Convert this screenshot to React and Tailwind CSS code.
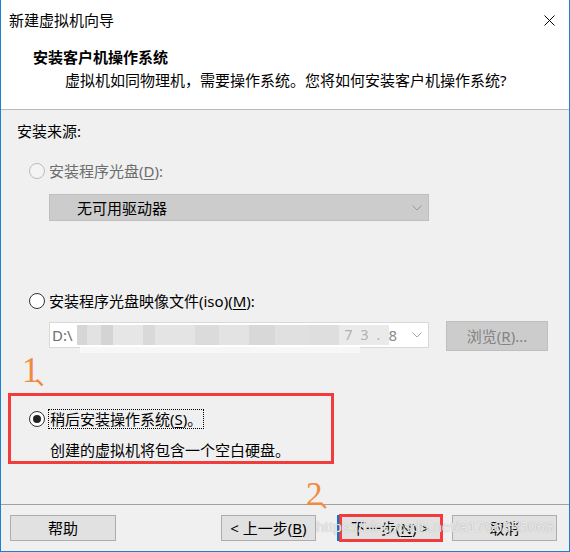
const F = "font-['Noto_Sans','Noto_Sans_CJK_SC',sans-serif]";

function Chevron({ color }) {
  return (
    <svg width="10" height="6" viewBox="0 0 10 6" className="shrink-0">
      <polyline points="0.5,0.5 5,5 9.5,0.5" fill="none" stroke={color} strokeWidth="1" />
    </svg>
  );
}

function U({ children }) {
  return <span className="underline underline-offset-2">{children}</span>;
}

export default function App() {
  return (
    <div className={`${F} relative w-[570px] h-[552px] bg-[#f0f0f0] border-x border-b border-[#1b7fd2] flex flex-col overflow-hidden text-[15px] leading-[20px] text-black`}>
      {/* header */}
      <div className="bg-white h-[110px] shrink-0 flex flex-col border-b border-[#b9b9b9]">
        <div className="h-[40px] flex items-center justify-between pl-[8px] pr-[14px]">
          <span>新建虚拟机向导</span>
          <svg width="11" height="11" viewBox="0 0 11 11">
            <path d="M0.5 0.5L10.5 10.5M10.5 0.5L0.5 10.5" stroke="#000" strokeWidth="1" />
          </svg>
        </div>
        <div className="pl-[32px] mt-[7px] font-bold">安装客户机操作系统</div>
        <div className="pl-[64px] mt-[3px]">虚拟机如同物理机，需要操作系统。您将如何安装客户机操作系统?</div>
      </div>

      {/* body */}
      <div className="flex-1 flex flex-col items-start">
        <div className="ml-[16px] mt-[11px]">安装来源:</div>

        <div className="ml-[28px] mt-[20px] h-[20px] flex items-center gap-[4px]">
          <span className="w-[16px] h-[16px] rounded-full border border-[#bcbcbc] bg-[#f4f4f4]" />
          <span className="text-[#6d6d6d]">安装程序光盘(<U>D</U>):</span>
        </div>

        <div className="ml-[48px] mt-[13px] w-[380px] h-[27px] bg-[#cccccc] border border-[#bfbfbf] flex items-center pl-[27px] pr-[6px]">
          <span className="flex-1">无可用驱动器</span>
          <Chevron color="#9a9a9a" />
        </div>

        <div className="ml-[28px] mt-[70px] h-[20px] flex items-center gap-[4px]">
          <span className="w-[16px] h-[16px] rounded-full border border-[#333333] bg-white" />
          <span>安装程序光盘映像文件(iso)(<U>M</U>):</span>
        </div>

        <div className="ml-[48px] mt-[10px] flex items-start">
          <div className="relative mt-[1px] w-[380px] h-[26px] bg-white border border-[#d9d9d9] flex items-center pl-[2px] pr-[6px]">
            <span className="text-[#6d6d6d]">D:\</span>
            <div className="flex-1 flex items-center h-[20px] ml-[4px]">
              <span className="w-[10px] h-[20px] bg-[#d6d6d6]" />
              <span className="w-[14px] h-[20px] bg-[#e2e2e2]" />
              <span className="w-[12px] h-[20px] bg-[#d4d4d4]" />
              <span className="w-[30px] h-[20px] bg-[#e6e6e6]" />
              <span className="w-[12px] h-[20px] bg-[#d9d9d9]" />
              <span className="w-[40px] h-[20px] bg-[#e4e4e4]" />
              <span className="w-[24px] h-[20px] bg-[#dbdbdb]" />
              <span className="w-[30px] h-[20px] bg-[#e3e3e3]" />
              <span className="w-[26px] h-[20px] bg-[#d8d8d8]" />
              <span className="w-[34px] h-[20px] bg-[#e0e0e0]" />
              <span className="w-[30px] h-[20px] bg-[#dedede]" />
              <span className="w-[50px] h-[20px] bg-[#eaeaea] text-[#b0b0b0] text-[14px] leading-[20px] tracking-[8px] pl-[6px]">73.</span>
              <span className="text-[#8a8a8a]">8</span>
            </div>
            <Chevron color="#a6a6a6" />
            <span className="absolute left-[30px] top-[24px] w-[280px] h-[6px] bg-[#f7f7f7]" />
          </div>
          <div className="ml-[17px] w-[102px] h-[30px] bg-[#cccccc] border border-[#bfbfbf] flex items-center justify-center text-[#838383]">
            浏览(<U>R</U>)...
          </div>
        </div>

        <div className="ml-[7px] mt-[42px] w-[326px] h-[71px] border-[3px] border-[#f23c3c] pt-[13px] pl-[18px] flex flex-col items-start">
          <div className="h-[20px] flex items-center gap-[3px]">
            <span className="w-[16px] h-[16px] rounded-full border border-[#333333] bg-white flex items-center justify-center">
              <span className="w-[8px] h-[8px] rounded-full bg-[#222222]" />
            </span>
            <span className="border border-dotted border-black px-[1px] leading-[18px]">稍后安装操作系统(<U>S</U>)。</span>
          </div>
          <div className="ml-[21px] mt-[11px]">创建的虚拟机将包含一个空白硬盘。</div>
        </div>
      </div>

      {/* separator */}
      <div className="h-px bg-[#a0a0a0] shrink-0" />

      {/* footer */}
      <div className="relative h-[46px] shrink-0 flex items-start pt-[10px]">
        <div className="ml-[9px] w-[106px] h-[26px] bg-[#e1e1e1] border border-[#adadad] flex items-center justify-center">帮助</div>
        <div className="ml-[105px] w-[95px] h-[26px] bg-[#e1e1e1] border border-[#adadad] flex items-center justify-center">&lt; 上一步(<U>B</U>)</div>
        <div className="relative ml-[21px] w-[106px] h-[26px] bg-[#e1e1e1] border-2 border-[#0078d7] flex items-center justify-center">
          下一步(<U>N</U>) &gt;
          <span className="absolute top-[-3px] bottom-[-3px] left-[0px] right-[-2px] border-[3px] border-[#f23c3c]" />
        </div>
        <div className="ml-[9px] w-[105px] h-[26px] bg-[#e1e1e1] border border-[#adadad] flex items-center justify-center">取消</div>

        <span className="absolute left-[315px] top-[12px] font-['Liberation_Sans',sans-serif] text-[15.5px] leading-[20px] text-white/75 [text-shadow:0_0_1px_#9a9a9a]">
          https://blog.csdn.net/a1766855068
        </span>
      </div>

      {/* annotations */}
      <div className="absolute left-[21px] top-[353px] flex items-end text-[#f28a3c]">
        <span className="font-['Liberation_Serif',serif] text-[35px] leading-[36px]">1</span>
        <span className="font-['Noto_Sans_CJK_SC',sans-serif] text-[26px] leading-[30px] -ml-[5px]">、</span>
      </div>
      <div className="absolute left-[305px] top-[476px] flex items-end text-[#f28a3c]">
        <span className="font-['Liberation_Serif',serif] text-[33px] leading-[36px]">2</span>
        <span className="font-['Noto_Sans_CJK_SC',sans-serif] text-[24px] leading-[30px] -ml-[4px]">、</span>
      </div>
    </div>
  );
}
